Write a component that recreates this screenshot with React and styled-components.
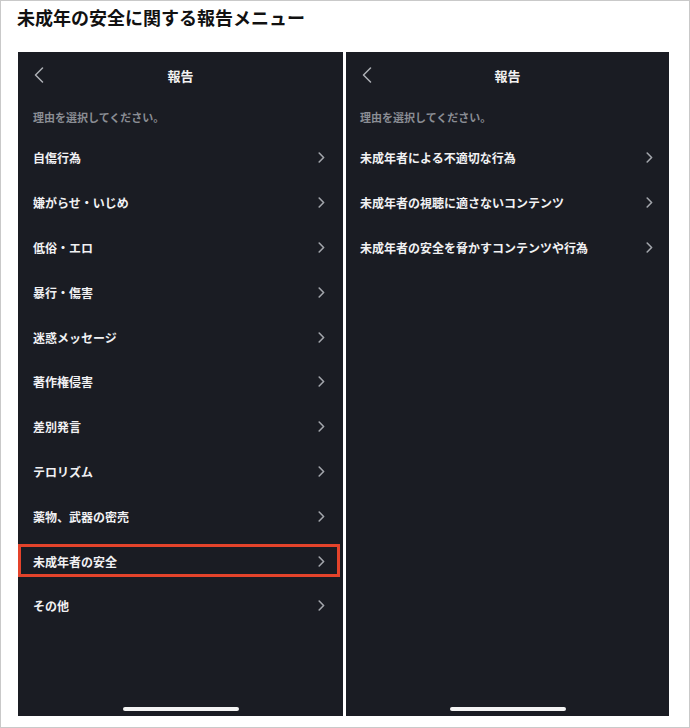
import React from "react";
import styled, { createGlobalStyle } from "styled-components";

const GlobalStyle = createGlobalStyle`
  html, body {
    margin: 0;
    padding: 0;
    background: #ffffff;
  }
  * {
    box-sizing: border-box;
  }
`;

const Page = styled.div`
  width: 690px;
  height: 728px;
  border: 1px solid #c9c9c9;
  background: #ffffff;
  font-family: "Noto Sans CJK JP", "Noto Sans", sans-serif;
  display: flex;
  flex-direction: column;
`;

const Title = styled.h1`
  margin: 0;
  padding: 4px 0 0 16px;
  height: 51px;
  font-size: 18px;
  line-height: 24px;
  font-weight: 700;
  color: #111111;
`;

const Screens = styled.div`
  display: flex;
  gap: 3px;
  padding-left: 17px;
`;

const Phone = styled.div`
  width: ${(p) => p.$width}px;
  height: 664px;
  background: #1a1c23;
  display: flex;
  flex-direction: column;
  align-items: stretch;
`;

const NavBar = styled.div`
  position: relative;
  height: 46px;
  display: flex;
  align-items: center;
  justify-content: center;
  color: #f2f2f2;
  font-size: 13px;
  font-weight: 700;
`;

const BackButton = styled.span`
  position: absolute;
  left: 16px;
  top: 15px;
  display: flex;
`;

const Hint = styled.div`
  height: 37.6px;
  display: flex;
  align-items: center;
  padding-left: ${(p) => p.$padLeft}px;
  font-size: 11px;
  color: #8a8d94;
  font-weight: 700;
`;

const List = styled.div`
  flex: 1;
  display: flex;
  flex-direction: column;
`;

const Row = styled.div`
  position: relative;
  height: 44.8px;
  display: flex;
  align-items: center;
  justify-content: space-between;
  padding: 0 ${(p) => p.$padRight}px 0 ${(p) => p.$padLeft}px;
  color: #f1f1f3;
  font-size: 12px;
  font-weight: 700;

  ${(p) =>
    p.$highlight &&
    `
    &::after {
      content: "";
      position: absolute;
      left: 0;
      right: 3px;
      top: 5.4px;
      bottom: 6.4px;
      border: 3.5px solid #e4432b;
    }
  `}
`;

const HomeBar = styled.div`
  align-self: center;
  width: 116px;
  height: 4px;
  border-radius: 2px;
  background: #f4f4f4;
  margin-bottom: 5px;
`;

const Chevron = () => (
  <svg width="7" height="11" viewBox="0 0 7 11">
    <path
      d="M1.2 1 L5.6 5.5 L1.2 10"
      fill="none"
      stroke="#a2a5ab"
      strokeWidth="1.6"
      strokeLinecap="round"
      strokeLinejoin="round"
    />
  </svg>
);

const BackChevron = () => (
  <svg width="10" height="16" viewBox="0 0 10 16">
    <path
      d="M8.5 1 L1.5 8 L8.5 15"
      fill="none"
      stroke="#aeb0b6"
      strokeWidth="1.5"
      strokeLinecap="round"
      strokeLinejoin="round"
    />
  </svg>
);

const reasons = [
  "自傷行為",
  "嫌がらせ・いじめ",
  "低俗・エロ",
  "暴行・傷害",
  "迷惑メッセージ",
  "著作権侵害",
  "差別発言",
  "テロリズム",
  "薬物、武器の密売",
  "未成年者の安全",
  "その他",
];

const minorReasons = [
  "未成年者による不適切な行為",
  "未成年者の視聴に適さないコンテンツ",
  "未成年者の安全を脅かすコンテンツや行為",
];

const ReportScreen = ({ width, items, highlighted, padLeft, padRight }) => (
  <Phone $width={width}>
    <NavBar>
      <BackButton>
        <BackChevron />
      </BackButton>
      報告
    </NavBar>
    <Hint $padLeft={padLeft}>理由を選択してください。</Hint>
    <List>
      {items.map((item) => (
        <Row
          key={item}
          $highlight={item === highlighted}
          $padLeft={padLeft}
          $padRight={padRight}
        >
          <span>{item}</span>
          <Chevron />
        </Row>
      ))}
    </List>
    <HomeBar />
  </Phone>
);

const App = () => (
  <>
    <GlobalStyle />
    <Page>
      <Title>未成年の安全に関する報告メニュー</Title>
      <Screens>
        <ReportScreen
          width={325}
          items={reasons}
          highlighted="未成年者の安全"
          padLeft={15}
          padRight={18}
        />
        <ReportScreen
          width={323}
          items={minorReasons}
          padLeft={14}
          padRight={16}
        />
      </Screens>
    </Page>
  </>
);

export default App;
